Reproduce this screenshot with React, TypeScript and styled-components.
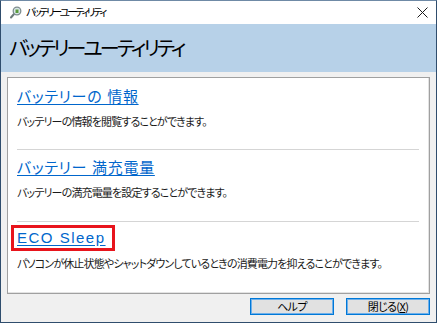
import React from "react";
import styled, { createGlobalStyle } from "styled-components";

const GlobalStyle = createGlobalStyle`
  html, body { margin: 0; padding: 0; background: #ffffff; }
  body { font-family: "Noto Sans CJK JP", "Liberation Sans", sans-serif; }
  * { box-sizing: border-box; }
`;

const Window = styled.div`
  width: 437px;
  height: 323px;
  border: 1px solid #2f4d6d;
  border-top-color: #6f8aa6;
  background: #f0f0f0;
  display: flex;
  flex-direction: column;
  overflow: hidden;
`;

const TitleBar = styled.div`
  height: 23px;
  background: #ffffff;
  display: flex;
  align-items: center;
  padding: 0 8px 0 8px;
  flex-shrink: 0;
`;

const TitleText = styled.span`
  font-size: 10.5px;
  letter-spacing: -2.6px;
  color: #000;
  margin-left: 4px;
  font-feature-settings: "palt";
  flex: 1;
  line-height: 1;
`;

const CloseBtn = styled.div`
  width: 12px;
  height: 12px;
  display: flex;
  align-items: center;
  justify-content: center;
`;

const Header = styled.div`
  height: 48px;
  background: #b7d1e8;
  display: flex;
  align-items: center;
  padding-left: 8px;
  padding-bottom: 1px;
  font-size: 20px;
  letter-spacing: -2.9px;
  color: #000;
  font-feature-settings: "palt";
  flex-shrink: 0;
`;

const Body = styled.div`
  flex: 1;
  display: flex;
  flex-direction: column;
  padding: 5px 6px 0 6px;
`;

const Panel = styled.div`
  height: 217px;
  background: #ffffff;
  border: 1px solid #a0a0a0;
  box-shadow: inset -1px -1px 0 #e3e3e3;
  padding: 0 10px 0 9px;
  display: flex;
  flex-direction: column;
`;

const Section = styled.div<{ $last?: boolean; $top: number }>`
  height: ${(p) => (p.$last ? "auto" : "72px")};
  flex: ${(p) => (p.$last ? 1 : "none")};
  border-bottom: ${(p) => (p.$last ? "none" : "1px solid #d5d5d5")};
  padding-top: ${(p) => p.$top}px;
  display: flex;
  flex-direction: column;
  align-items: flex-start;
`;

const LinkTitle = styled.a<{ $boxed?: boolean; $spacing: number }>`
  font-family: "Liberation Sans", "Noto Sans CJK JP", sans-serif;
  font-size: 15px;
  line-height: 18px;
  letter-spacing: ${(p) => p.$spacing}px;
  color: #0066cc;
  text-decoration: underline;
  text-underline-offset: 2px;
  font-feature-settings: "palt";
  cursor: pointer;
  padding: ${(p) => (p.$boxed ? "1px 6px 1px 3px" : "0")};
  margin-left: ${(p) => (p.$boxed ? "-6px" : "0")};
  border: ${(p) => (p.$boxed ? "3px solid #e8141c" : "none")};
`;

const Desc = styled.div<{ $gap: number }>`
  margin-top: ${(p) => p.$gap}px;
  font-size: 11px;
  line-height: 14px;
  letter-spacing: -0.85px;
  color: #1a1a1a;
  font-feature-settings: "palt";
`;

const Footer = styled.div`
  height: 20px;
  margin-top: 4px;
  display: flex;
  justify-content: flex-end;
  gap: 12px;
`;

const Button = styled.button`
  width: 84px;
  height: 17px;
  background: #e1e1e1;
  border: 1px solid #0078d7;
  box-shadow: inset 0 0 0 1px #6fb0ea;
  font-family: "Noto Sans CJK JP", sans-serif;
  font-size: 11px;
  letter-spacing: -0.6px;
  line-height: 1;
  color: #000;
  padding: 0;
  display: flex;
  align-items: center;
  justify-content: center;
  font-feature-settings: "palt";
`;

const AccessKey = styled.span`
  text-decoration: underline;
`;

const AppIcon = () => (
  <svg width="13" height="13" viewBox="0 0 13 13">
    <line x1="2" y1="11.5" x2="5" y2="8" stroke="#6b7a7a" strokeWidth="2" strokeLinecap="round" />
    <circle cx="8" cy="5" r="3.8" fill="#d9e6e8" stroke="#7d8c8e" strokeWidth="1.3" />
    <rect x="6.5" y="3.5" width="3" height="3.5" fill="#5a9b3c" />
  </svg>
);

const CloseIcon = () => (
  <svg width="11" height="11" viewBox="0 0 11 11">
    <path d="M0.5 0.5 L10.5 10.5 M10.5 0.5 L0.5 10.5" stroke="#1a1a1a" strokeWidth="1" />
  </svg>
);

export default function App() {
  return (
    <>
      <GlobalStyle />
      <Window>
        <TitleBar>
          <AppIcon />
          <TitleText>バッテリーユーティリティ</TitleText>
          <CloseBtn>
            <CloseIcon />
          </CloseBtn>
        </TitleBar>
        <Header>バッテリーユーティリティ</Header>
        <Body>
          <Panel>
            <Section $top={10}>
              <LinkTitle $spacing={0.7}>バッテリーの 情報</LinkTitle>
              <Desc $gap={8}>バッテリーの情報を閲覧することができます。</Desc>
            </Section>
            <Section $top={9}>
              <LinkTitle $spacing={0.7}>バッテリー 満充電量</LinkTitle>
              <Desc $gap={8}>バッテリーの満充電量を設定することができます。</Desc>
            </Section>
            <Section $last $top={3}>
              <LinkTitle $boxed $spacing={1.5}>ECO Sleep</LinkTitle>
              <Desc $gap={5}>パソコンが休止状態やシャットダウンしているときの消費電力を抑えることができます。</Desc>
            </Section>
          </Panel>
          <Footer>
            <Button>ヘルプ</Button>
            <Button>
              閉じる(<AccessKey>X</AccessKey>)
            </Button>
          </Footer>
        </Body>
      </Window>
    </>
  );
}
